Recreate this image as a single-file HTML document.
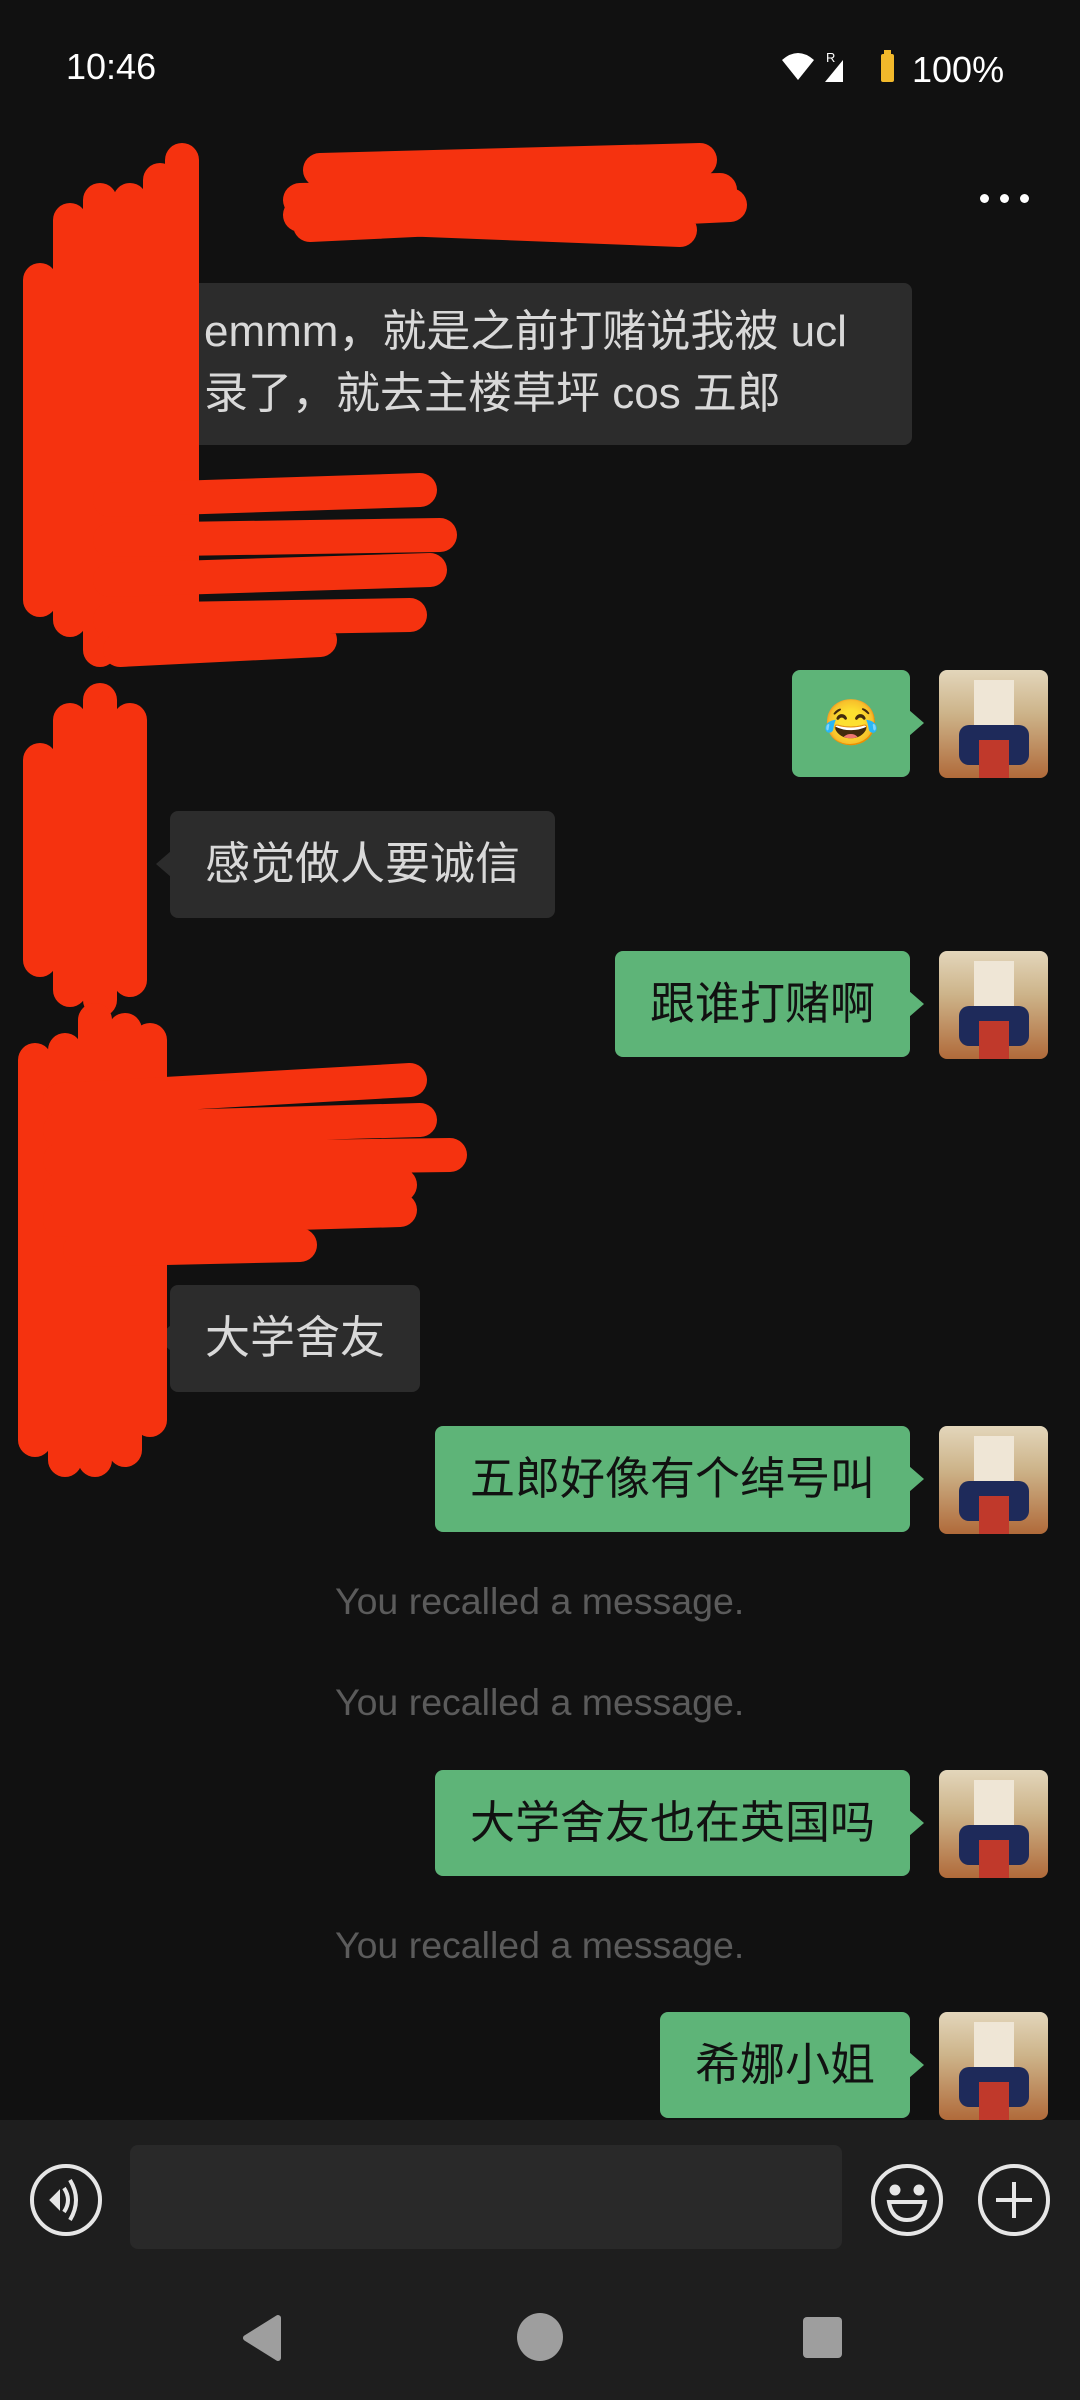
<!DOCTYPE html>
<html><head><meta charset="utf-8"><style>
*{margin:0;padding:0;box-sizing:border-box}
body{width:1080px;height:2400px;background:#111;position:relative;overflow:hidden;font-family:"Liberation Sans","Noto Sans CJK SC",sans-serif}
.abs{position:absolute}
.b{position:absolute;border-radius:8px;font-size:45px;line-height:62px;padding:22px 35px;white-space:nowrap}
.g{background:#5eb478;color:#111;right:170px}
.g:after{content:"";position:absolute;right:-14px;top:40px;border-left:15px solid #5eb478;border-top:13px solid transparent;border-bottom:13px solid transparent}
.k{background:#2c2c2c;color:#d9d9d9}
.k:before{content:"";position:absolute;left:-14px;top:40px;border-right:15px solid #2c2c2c;border-top:13px solid transparent;border-bottom:13px solid transparent}
.av{position:absolute;left:939px;width:109px;height:108px;border-radius:8px;overflow:hidden;background:linear-gradient(180deg,#e3d6bb,#cdb48a 40%,#b06a3a)}
.av i{position:absolute;display:block}
.rc{position:absolute;left:335px;font-size:37.5px;color:#5b5b5b}
</style></head><body>
<div class="abs" style="left:66px;top:46px;color:#fff;font-size:36px">10:46</div>
<svg class="abs" style="left:780px;top:48px" width="240" height="40" viewBox="0 0 240 40">
<path d="M2 12 Q18 -2 34 12 L18 32 Z" fill="#fff"/>
<text x="46" y="14" font-size="13" fill="#fff" font-family="Liberation Sans">R</text>
<path d="M45 34 L63 12 L63 34 Z" fill="#fff"/>
<rect x="101" y="6" width="13" height="28" rx="2" fill="#f2b92b"/><rect x="104" y="2" width="7" height="4" fill="#f2b92b"/>
<text x="132" y="34" font-size="36" fill="#fff" font-family="Liberation Sans">100%</text>
</svg>
<div class="abs" style="left:980px;top:194px;width:50px;height:10px">
<span class="abs" style="left:0;width:9px;height:9px;border-radius:50%;background:#fff"></span>
<span class="abs" style="left:20px;width:9px;height:9px;border-radius:50%;background:#fff"></span>
<span class="abs" style="left:40px;width:9px;height:9px;border-radius:50%;background:#fff"></span></div>

<div class="b k" style="left:182px;top:283px;width:730px;height:162px;line-height:62px;padding:18px 22px;font-size:44px">emmm，就是之前打赌说我被 ucl<br>录了，就去主楼草坪 cos 五郎</div>

<div class="b g" style="top:670px;width:118px;height:107px;text-align:center;padding:22px 0">😂</div>
<div class="av" style="top:670px"><i style="left:20px;top:55px;width:70px;height:40px;background:#1e2a5a;border-radius:10px"></i><i style="left:40px;top:70px;width:30px;height:38px;background:#c0392b"></i><i style="left:35px;top:10px;width:40px;height:45px;background:#efe6d6"></i></div>
<div class="b k" style="left:170px;top:811px;height:107px">感觉做人要诚信</div>
<div class="b g" style="top:951px;height:106px">跟谁打赌啊</div>
<div class="av" style="top:951px"><i style="left:20px;top:55px;width:70px;height:40px;background:#1e2a5a;border-radius:10px"></i><i style="left:40px;top:70px;width:30px;height:38px;background:#c0392b"></i><i style="left:35px;top:10px;width:40px;height:45px;background:#efe6d6"></i></div>
<div class="b k" style="left:170px;top:1285px;height:107px">大学舍友</div>
<div class="b g" style="top:1426px;height:106px">五郎好像有个绰号叫</div>
<div class="av" style="top:1426px"><i style="left:20px;top:55px;width:70px;height:40px;background:#1e2a5a;border-radius:10px"></i><i style="left:40px;top:70px;width:30px;height:38px;background:#c0392b"></i><i style="left:35px;top:10px;width:40px;height:45px;background:#efe6d6"></i></div>
<div class="rc" style="top:1580px">You recalled a message.</div>
<div class="rc" style="top:1681px">You recalled a message.</div>
<div class="b g" style="top:1770px;height:106px">大学舍友也在英国吗</div>
<div class="av" style="top:1770px"><i style="left:20px;top:55px;width:70px;height:40px;background:#1e2a5a;border-radius:10px"></i><i style="left:40px;top:70px;width:30px;height:38px;background:#c0392b"></i><i style="left:35px;top:10px;width:40px;height:45px;background:#efe6d6"></i></div>
<div class="rc" style="top:1924px">You recalled a message.</div>
<div class="b g" style="top:2012px;height:106px">希娜小姐</div>
<div class="av" style="top:2012px"><i style="left:20px;top:55px;width:70px;height:40px;background:#1e2a5a;border-radius:10px"></i><i style="left:40px;top:70px;width:30px;height:38px;background:#c0392b"></i><i style="left:35px;top:10px;width:40px;height:45px;background:#efe6d6"></i></div>

<svg class="abs" style="left:0;top:0" width="1080" height="2400" fill="none" stroke="#f5320f" stroke-linecap="round" stroke-width="34">
<path d="M300 200 L720 190 M310 225 L730 205 M320 170 L700 160 M300 215 L680 230"/>
<path d="M40 280 L40 600 M70 220 L70 620 M100 200 L100 650 M130 200 L130 640 M160 180 L160 630 M182 160 L182 620"/>
<path d="M110 500 L420 490 M110 540 L440 535 M110 580 L430 570 M110 620 L410 615 M120 650 L320 640"/>
<path d="M40 760 L40 960 M70 720 L70 990 M100 700 L100 1000 M130 720 L130 980"/>
<path d="M35 1060 L35 1440 M65 1050 L65 1460 M95 1020 L95 1460 M125 1030 L125 1450 M150 1040 L150 1420"/>
<path d="M60 1100 L410 1080 M60 1130 L420 1120 M60 1160 L450 1155 M60 1190 L400 1185 M60 1220 L400 1210 M80 1250 L300 1245"/>
</svg>

<div class="abs" style="left:0;top:2120px;width:1080px;height:280px;background:#1e1e1e"></div>
<div class="abs" style="left:130px;top:2145px;width:712px;height:104px;border-radius:8px;background:#292929"></div>
<svg class="abs" style="left:0;top:2150px" width="1080" height="250" fill="none" stroke="#e6e6e6" stroke-width="4">
<circle cx="66" cy="50" r="34"/>
<path d="M58 44 L52 50 L58 56 Z" fill="#e6e6e6"/><path d="M64 38 Q72 50 64 62"/><path d="M70 30 Q82 50 70 70"/>
<circle cx="907" cy="50" r="34"/><circle cx="895" cy="40" r="3.5" fill="#e6e6e6"/><circle cx="919" cy="40" r="3.5" fill="#e6e6e6"/>
<path d="M889 52 L925 52 Q922 70 907 70 Q892 70 889 52 Z"/>
<circle cx="1014" cy="50" r="34"/><path d="M1014 32 V68 M996 50 H1032"/>
<path d="M278 168 L278 208 L246 188 Z" fill="#9e9e9e" stroke="#9e9e9e" stroke-linejoin="round" stroke-width="6"/>
<ellipse cx="540" cy="187" rx="23" ry="24" fill="#9e9e9e" stroke="none"/>
<rect x="803" y="167" width="39" height="41" rx="4" fill="#9e9e9e" stroke="none"/>
</svg>
</body></html>
